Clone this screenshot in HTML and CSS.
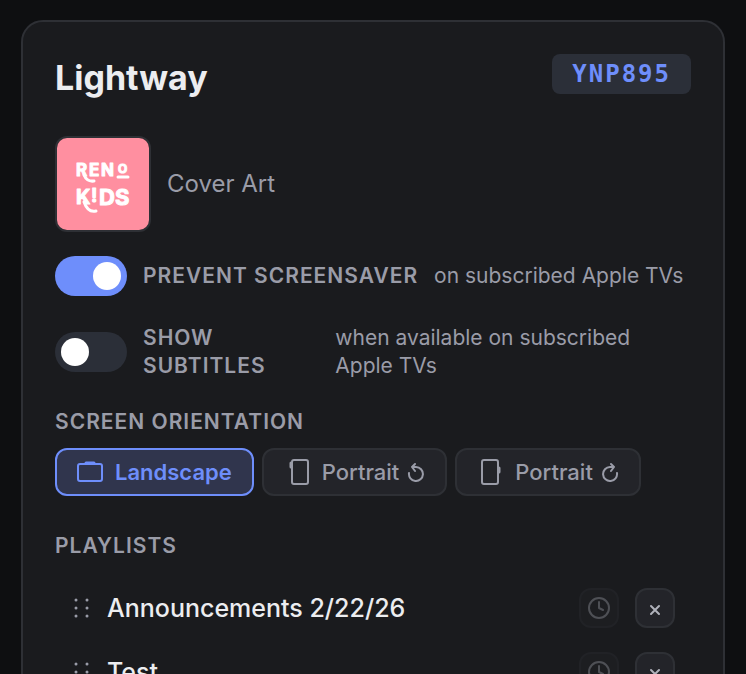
FILE: index.html
```html
<!DOCTYPE html>
<html lang="en">
<head>
  <meta charset="UTF-8">
  <meta name="viewport" content="width=device-width, initial-scale=1.0">
  <title>Lightway</title>
  <link rel="stylesheet" href="styles.css">
</head>
<body>

  <main class="card">
    <header class="card-header">
      <h1>Lightway</h1>
      <span class="code">YNP895</span>
    </header>

    <!-- Cover art -->
    <div class="cover">
      <svg class="cover-art" viewBox="0 0 92 92" role="img" aria-label="Reno Kids">
        <rect width="92" height="92" fill="#ff8fa0"/>
        <g class="cover-text">
          <text x="19" y="38" font-size="17">R</text>
          <text x="32" y="38" font-size="17">E</text>
          <text x="44" y="38" font-size="17">N</text>
          <text x="61" y="35" font-size="12">O</text>
          <text x="19" y="66" font-size="20">K</text>
          <text x="34" y="64" font-size="19">!</text>
          <text x="42" y="67" font-size="22">D</text>
          <text x="58" y="67" font-size="22">S</text>
        </g>
        <path class="cover-swash" d="M61 39h10M27 37q3 7 10 6M27 64q4 11 12 9"/>
      </svg>
      <span class="cover-label">Cover Art</span>
    </div>

    <!-- Settings -->
    <div class="setting">
      <input class="toggle" type="checkbox" id="screensaver" checked>
      <label class="label" for="screensaver">Prevent Screensaver</label>
      <span class="hint">on subscribed Apple TVs</span>
    </div>

    <div class="setting">
      <input class="toggle" type="checkbox" id="subtitles">
      <label class="label" for="subtitles">Show Subtitles</label>
      <span class="hint">when available on subscribed Apple TVs</span>
    </div>

    <section class="orientation">
      <h2 class="label">Screen Orientation</h2>
      <div class="options">
        <button class="option active" type="button">
          <svg class="device" viewBox="0 0 26 28" aria-hidden="true">
            <rect x="1" y="6" width="24" height="17" rx="2"/>
            <path class="tab" d="M9 5h8"/>
          </svg>
          Landscape
        </button>
        <button class="option" type="button">
          <svg class="device" viewBox="0 0 26 28" aria-hidden="true">
            <rect x="8" y="2" width="16" height="24" rx="2"/>
            <path class="tab" d="M7 5v4"/>
          </svg>
          <span>Portrait</span>
          <svg class="arrow" viewBox="0 0 18 20" aria-hidden="true">
            <path d="M2 11a7 7 0 1 0 7-6H5M8 2L5 5l3 4"/>
          </svg>
        </button>
        <button class="option" type="button">
          <svg class="device" viewBox="0 0 26 28" aria-hidden="true">
            <rect x="5" y="2" width="16" height="24" rx="2"/>
            <path class="tab" d="M22 10v4"/>
          </svg>
          <span>Portrait</span>
          <svg class="arrow" viewBox="0 0 18 20" aria-hidden="true">
            <path d="M16 11a7 7 0 1 1-7-6h4M10 2l3 3-3 4"/>
          </svg>
        </button>
      </div>
    </section>

    <section class="playlists">
      <h2 class="label">Playlists</h2>
      <ul>
        <li>
          <svg class="grip" viewBox="0 0 20 20" aria-hidden="true">
            <path d="M5 2h.01M16 2h.01M5 10h.01M16 10h.01M5 18h.01M16 18h.01"/>
          </svg>
          <span class="name">Announcements 2/22/26</span>
          <button class="icon-button" type="button" aria-label="Schedule" disabled>
            <svg viewBox="0 0 24 24" aria-hidden="true"><circle cx="12" cy="12" r="10"/><path d="M12 6v6l4 2"/></svg>
          </button>
          <button class="icon-button remove" type="button" aria-label="Remove">
            <svg viewBox="0 0 24 24" aria-hidden="true"><path d="M8 10l8 8M16 10l-8 8"/></svg>
          </button>
        </li>
        <li>
          <svg class="grip" viewBox="0 0 20 20" aria-hidden="true">
            <path d="M5 2h.01M16 2h.01M5 10h.01M16 10h.01M5 18h.01M16 18h.01"/>
          </svg>
          <span class="name">Test</span>
          <button class="icon-button" type="button" aria-label="Schedule" disabled>
            <svg viewBox="0 0 24 24" aria-hidden="true"><circle cx="12" cy="12" r="10"/><path d="M12 6v6l4 2"/></svg>
          </button>
          <button class="icon-button remove" type="button" aria-label="Remove">
            <svg viewBox="0 0 24 24" aria-hidden="true"><path d="M8 10l8 8M16 10l-8 8"/></svg>
          </button>
        </li>
      </ul>
    </section>
  </main>

</body>
</html>
```

FILE: styles.css
```css
* {
  box-sizing: border-box;
}

body {
  margin: 0;
  padding: 20px 21px;
  background: #0e0f11;
  color: #ecedf0;
  font-family: Inter, "Open Sans", sans-serif;
  font-size: 22px;
  line-height: 28px;
}

h1, h2, ul {
  margin: 0;
  padding: 0;
}

svg {
  display: block;
  flex: none;
  fill: none;
  stroke: currentColor;
  stroke-width: 2;
  stroke-linecap: round;
  stroke-linejoin: round;
}

.card {
  padding: 32px;
  background: #1a1b1e;
  border: 2px solid #2e3035;
  border-radius: 22px;
}

.card-header {
  display: flex;
  justify-content: space-between;
  align-items: flex-start;
  margin-bottom: 34px;
}

h1 {
  font-size: 34px;
  font-weight: 700;
  line-height: 48px;
}

.code {
  padding: 0 20px;
  background: #2b2f38;
  border-radius: 8px;
  color: #6e8efb;
  font-family: "DejaVu Sans Mono", monospace;
  font-size: 24px;
  font-weight: 700;
  letter-spacing: 2px;
  line-height: 40px;
}

/* Cover art */
.cover {
  display: flex;
  align-items: center;
  gap: 16px;
  margin-bottom: 24px;
  color: #9a9ca8;
}

.cover-label {
  font-size: 24px;
}

.cover-art {
  width: 96px;
  height: 96px;
  border: 2px solid #2e3035;
  border-radius: 12px;
}

.cover-art rect {
  stroke: none;
}

.cover-text {
  fill: #fff;
  stroke: #fff;
  stroke-width: 1;
  font-weight: 700;
}

.cover-swash {
  stroke: #fff;
  stroke-width: 3;
}

/* Settings */
.setting {
  display: flex;
  align-items: center;
  gap: 16px;
  margin-bottom: 28px;
}

.label {
  color: #9a9ca8;
  font-size: 21px;
  font-weight: 600;
  letter-spacing: 1px;
  line-height: 28px;
  text-transform: uppercase;
}

.hint {
  color: #9a9ca8;
  font-size: 21px;
}

.toggle {
  appearance: none;
  flex: none;
  width: 72px;
  height: 40px;
  margin: 0;
  padding: 6px;
  background: #2b2f38;
  border-radius: 20px;
  cursor: pointer;
}

.toggle::before {
  content: "";
  display: block;
  width: 28px;
  height: 28px;
  background: #fff;
  border-radius: 50%;
}

.toggle:checked {
  background: #6e8efb;
}

.toggle:checked::before {
  margin-left: auto;
}

/* Orientation buttons */
.orientation {
  margin-bottom: 36px;
}

.options {
  display: flex;
  flex-wrap: wrap;
  gap: 8px;
  margin-top: 12px;
}

.option {
  display: flex;
  align-items: center;
  gap: 12px;
  height: 48px;
  padding: 0 20px;
  background: #232429;
  border: 2px solid #2e3035;
  border-radius: 12px;
  color: #9a9ca8;
  font: inherit;
  font-weight: 500;
  cursor: pointer;
}

.option.active {
  background: #30354d;
  border-color: #6e8efb;
  color: #6e8efb;
  font-weight: 600;
}

.device {
  width: 26px;
  height: 28px;
}

.tab {
  stroke-width: 3;
}

.arrow {
  width: 18px;
  height: 20px;
  margin-left: -4px;
}

/* Playlists */
.playlists ul {
  margin-top: 16px;
}

.playlists li {
  display: flex;
  align-items: center;
  gap: 16px;
  padding: 12px 16px;
}

.grip {
  width: 20px;
  height: 20px;
  color: #9a9ca8;
  stroke-width: 3;
}

.name {
  flex: 1;
  font-size: 25px;
  font-weight: 500;
}

.icon-button {
  display: flex;
  align-items: center;
  justify-content: center;
  width: 40px;
  height: 40px;
  padding: 0;
  background: #232429;
  border: 2px solid #2e3035;
  border-radius: 12px;
  color: #b0b2bb;
}

.icon-button svg {
  width: 24px;
  height: 24px;
}

.icon-button:disabled {
  opacity: 0.35;
}
```
